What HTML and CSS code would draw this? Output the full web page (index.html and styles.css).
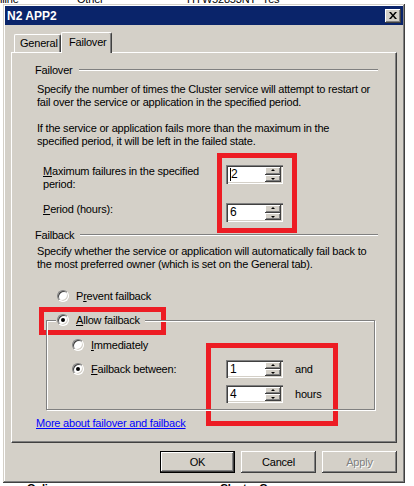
FILE: index.html
```html
<!DOCTYPE html>
<html>
<head>
<meta charset="utf-8">
<link rel="stylesheet" href="styles.css">
</head>
<body>
<div class="screen">
  <div class="list">
    <div class="lrow top"><span class="c1">iline</span><span class="c2">Other</span><span class="c3">HYW52853NT</span><span class="c4">Yes</span></div>
    <div class="lrow bot"><span class="b1">Online</span><span class="b2">Cluster Group</span></div>
  </div>

  <div class="dialog">
    <div class="titlebar">
      <span class="title">N2 APP2</span>
      <span class="xbtn"><svg width="8" height="7" viewBox="0 0 8 7"><path d="M0 0h2l2 2.5L6 0h2L5 3.5 8 7H6L4 4.5 2 7H0l3-3.5z" fill="#000"/></svg></span>
    </div>
    <div class="body">
      <div class="tabs">
        <div class="tab">General</div>
        <div class="tab sel">Failover</div>
      </div>
      <div class="panel">
        <div class="sec">
          <div class="hdr"><span>Failover</span><i class="etch"></i></div>
          <p class="p p1">Specify the number of times the Cluster service will attempt to restart or<br>fail over the service or application in the specified period.</p>
          <p class="p p2">If the service or application fails more than the maximum in the<br>specified period, it will be left in the failed state.</p>
          <div class="frow r1">
            <span class="lbl"><u>M</u>aximum failures in the specified<br>period:</span>
            <span class="spin"><span class="val"><i class="caret"></i>2</span><span class="arrows"><b class="up"></b><b class="dn"></b></span></span>
          </div>
          <div class="frow r2">
            <span class="lbl"><u>P</u>eriod (hours):</span>
            <span class="spin"><span class="val">6</span><span class="arrows"><b class="up"></b><b class="dn"></b></span></span>
          </div>
          <div class="hdr h2"><span>Failback</span><i class="etch"></i></div>
          <p class="p p3">Specify whether the service or application will automatically fail back to<br>the most preferred owner (which is set on the General tab).</p>
          <div class="rrow prevent"><i class="radio"></i><span>P<u>r</u>event failback</span></div>
          <fieldset class="grp">
            <legend><i class="radio on"></i><span><u>A</u>llow failback</span></legend>
            <div class="rrow imm"><i class="radio"></i><span><u>I</u>mmediately</span></div>
            <div class="between">
              <div class="rrow fb"><i class="radio on"></i><span><u>F</u>ailback between:</span></div>
              <span class="spin s3 a1"><span class="val">1</span><span class="arrows"><b class="up"></b><b class="dn"></b></span></span>
              <span class="unit a1">and</span>
              <span class="spin s3 a2"><span class="val">4</span><span class="arrows"><b class="up"></b><b class="dn"></b></span></span>
              <span class="unit a2">hours</span>
            </div>
          </fieldset>
          <a class="link">More about failover and failback</a>
        </div>
      </div>
      <div class="btns">
        <span class="btn def">OK</span>
        <span class="btn">Cancel</span>
        <span class="btn dis">Apply</span>
      </div>
    </div>
  </div>

  <div class="redbox rb1"></div>
  <div class="redbox rb2"></div>
  <div class="redbox rb3"></div>
</div>
</body>
</html>
```

FILE: styles.css
```css
* { box-sizing: border-box; }
html, body { margin: 0; padding: 0; background: #fff; }
body { font-family: "Liberation Sans", Arial, sans-serif; font-size: 11px; letter-spacing: -0.2px; color: #000; }
.screen { position: relative; width: 414px; height: 486px; overflow: hidden; }

.list { height: 486px; display: flex; flex-direction: column; justify-content: space-between; }
.lrow { display: flex; height: 13px; line-height: 13px; white-space: nowrap; }
.lrow.top { margin-top: -7px; }
.lrow.bot { margin-bottom: -9px; font-weight: bold; }
.c1 { width: 77px; }
.c2 { width: 110px; }
.c3 { width: 75px; }
.b1 { margin-left: 27px; width: 193px; }

.dialog {
  position: absolute; left: 3px; top: 4px; width: 402px; height: 479px;
  background: #D4D0C8; padding: 2px;
  box-shadow: inset -1px -1px #404040, inset 1px 1px #D4D0C8, inset -2px -2px #808080, inset 2px 2px #fff;
  display: flex; flex-direction: column;
}
.titlebar {
  height: 19px; background: #0A246A; color: #fff; display: flex; align-items: center;
  justify-content: space-between; padding: 0 2px 0 2px;
}
.title { font-weight: bold; font-size: 12px; letter-spacing: 0; }
.xbtn {
  width: 16px; height: 14px; background: #D4D0C8; display: flex; align-items: center; justify-content: center;
  box-shadow: inset -1px -1px #404040, inset 1px 1px #fff, inset -2px -2px #808080;
}
.body { flex: 1; display: flex; flex-direction: column; padding: 7px 6px 0 6px; }

.tabs { display: flex; align-items: flex-end; height: 20px; padding-left: 3px; position: relative; z-index: 2; }
.tab {
  height: 18px; padding: 0 5px; line-height: 17px; background: #D4D0C8; white-space: nowrap;
  border-top: 1px solid #fff; border-left: 1px solid #fff; border-right: 1px solid #404040;
  box-shadow: inset -1px 0 #808080; border-radius: 2px 2px 0 0; width: 47px;
}
.tab.sel { height: 21px; width: 51px; margin-bottom: -1px; padding: 0 7px; line-height: 19px; }

.panel {
  height: 391px; position: relative; z-index: 1;
  border-top: 1px solid #fff; border-left: 1px solid #fff; border-right: 1px solid #404040; border-bottom: 1px solid #404040;
  box-shadow: inset -1px -1px #808080;
}
.sec { padding: 0 18px 0 23px; }
.hdr { display: flex; align-items: center; height: 13px; margin-top: 10px; }
.hdr.h2 { margin-top: 6px; }
.etch { flex: 1; height: 2px; border-top: 1px solid #808080; border-bottom: 1px solid #fff; margin-left: 6px; margin-top: 1px; }
.p { margin: 0 0 0 2px; line-height: 13px; white-space: nowrap; }
.p1 { margin-top: 7px; }
.p2 { margin-top: 13px; }
.p3 { margin-top: 4px; }

.frow { display: grid; grid-template-columns: 183px 57px; margin-left: 8px; }
.r1 { margin-top: 17px; height: 26px; }
.r2 { margin-top: 12px; }
.lbl { line-height: 13px; }

.spin {
  width: 57px; height: 19px; display: flex; background: #fff;
  box-shadow: inset 1px 1px #808080, inset 2px 2px #404040, inset -1px -1px #fff, inset -2px -2px #D4D0C8;
  padding: 2px;
}
.spin.s3 { height: 18px; }
.val { flex: 1; padding-left: 2px; line-height: 15px; font-size: 12px; display: flex; align-items: center; }
.caret { width: 1px; height: 13px; background: #000; }
.arrows { width: 16px; display: flex; flex-direction: column; }
.arrows b {
  flex: 1; background: #D4D0C8; position: relative;
  box-shadow: inset -1px -1px #404040, inset 1px 1px #fff, inset -2px -2px #808080;
}
.arrows b::after {
  content: ""; position: absolute; left: 6px; width: 0; height: 0;
  border-left: 2px solid transparent; border-right: 2px solid transparent;
}
.arrows b.up::after { top: 2px; border-bottom: 2px solid #000; }
.arrows b.dn::after { top: 3px; border-top: 2px solid #000; }

.rrow { display: flex; align-items: center; height: 14px; gap: 7px; }
.prevent { margin-top: 18px; margin-left: 22px; }
.radio {
  width: 12px; height: 12px; border-radius: 50%; background: #fff; position: relative; flex: none;
  border: 1px solid; border-color: #808080 #fff #fff #808080;
  box-shadow: inset 1px 1px #404040, inset -1px -1px #D4D0C8;
}
.radio.on::after {
  content: ""; position: absolute; left: 3px; top: 3px; width: 4px; height: 4px; border-radius: 50%; background: #000;
}

.grp {
  margin: 10px 0 0 11px; width: 329px; padding: 0 0 6px 25px; min-width: 0;
  border: 1px solid #808080; box-shadow: inset 1px 1px #fff, 1px 1px #fff;
}
.grp legend { display: flex; align-items: center; gap: 7px; padding: 0 5px 0 1px; margin-left: -16px; background: #D4D0C8; height: 14px; }
.imm { margin-top: 11px; }
.between { display: grid; grid-template-columns: 142px 57px auto; column-gap: 12px; row-gap: 7px; align-items: center; margin-top: 8px; }
.between .fb { grid-row: 1; grid-column: 1; }
.a1 { grid-row: 1; }
.a2 { grid-row: 2; }
.spin.a1, .spin.a2 { grid-column: 2; }
.unit.a1, .unit.a2 { grid-column: 3; }
.unit { line-height: 13px; }

.link { display: block; margin: 7px 0 0 1px; color: #0000FF; text-decoration: underline; line-height: 13px; }

.btns { display: flex; justify-content: flex-end; gap: 6px; margin-top: 8px; }
.btn {
  width: 75px; height: 22px; display: flex; align-items: center; justify-content: center; background: #D4D0C8;
  box-shadow: inset -1px -1px #404040, inset 1px 1px #fff, inset -2px -2px #808080;
}
.btn.def { box-shadow: inset 0 0 0 1px #000, inset -2px -2px #404040, inset 2px 2px #fff, inset -3px -3px #808080; }
.btn.dis { color: #808080; text-shadow: 1px 1px #fff; }

.redbox { position: absolute; border: 5px solid #ED1C24; }
.rb1 { left: 217px; top: 153px; width: 80px; height: 80px; }
.rb2 { left: 39px; top: 307px; width: 127px; height: 28px; }
.rb3 { left: 206px; top: 343px; width: 132px; height: 83px; }
```
